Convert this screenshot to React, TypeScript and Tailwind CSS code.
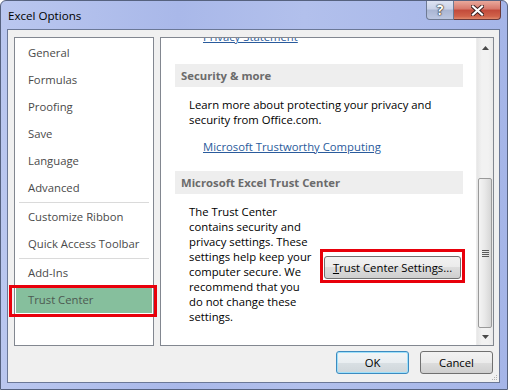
import React from "react";

const navTop = ["General", "Formulas", "Proofing", "Save", "Language", "Advanced"];

function NavItem({ label }: { label: string }) {
  return (
    <div className="h-[27px] flex items-center pl-[13px] text-[#4a4a4a] whitespace-nowrap">{label}</div>
  );
}

function Sep() {
  return <div className="h-[1px] mx-[4px] bg-[#dadada]" />;
}

export default function App() {
  return (
    <div className="relative w-[508px] h-[390px] overflow-hidden font-['Open_Sans',sans-serif] text-[11.3px] leading-[15px] text-black rounded-t-[6px] border border-[#56627f] bg-[linear-gradient(90deg,#bac7ef_0%,#a9b8e9_35%,#b2c0ec_60%,#a5b5e8_100%)]">
      {/* title bar */}
      <div className="flex h-[28px] items-start justify-between">
        <div className="pl-[7px] pt-[7px] text-[11.6px] text-black">Excel Options</div>
        <div className="flex pr-[6px]">
          <div className="w-[28px] h-[19px] flex items-center justify-center rounded-bl-[4px] border border-t-0 border-[#6e7a93] bg-[linear-gradient(180deg,#dde3f2_0%,#c9d2e8_45%,#a9b5d2_50%,#bcc7e2_100%)] font-bold text-[14px] leading-[14px] text-white [text-shadow:0_0_1px_#222,0_0_1px_#222,0_0_2px_#333]">
            ?
          </div>
          <div className="w-[47px] h-[19px] flex items-center justify-center rounded-br-[4px] border border-l-0 border-t-0 border-[#6b3a3a] bg-[linear-gradient(180deg,#e9a99c_0%,#d6776a_45%,#c24a3a_50%,#d0624a_85%,#e0896c_100%)]">
            <svg width="13" height="11" viewBox="0 0 13 11">
              <path d="M2 1.5 L11 9.5 M11 1.5 L2 9.5" stroke="#3a2020" strokeWidth="4" strokeLinecap="square" />
              <path d="M2 1.5 L11 9.5 M11 1.5 L2 9.5" stroke="#ffffff" strokeWidth="2.2" strokeLinecap="square" />
            </svg>
          </div>
        </div>
      </div>

      {/* client area */}
      <div className="relative ml-[6px] mr-[7px] h-[354px] border border-[#6b7897] bg-[#f0f0f0] flex flex-col">
        <div className="flex gap-[6px] pl-[6px] pt-[7px] h-[316px]">
          {/* left nav */}
          <div className="w-[140px] h-[309px] border border-[#828790] bg-white pt-[1px]">
            {navTop.map((n) => (
              <NavItem key={n} label={n} />
            ))}
            <div className="mt-[1px]">
              <Sep />
            </div>
            <NavItem label="Customize Ribbon" />
            <NavItem label="Quick Access Toolbar" />
            <div className="mt-[1px]">
              <Sep />
            </div>
            <div className="h-[26px] flex items-center pl-[13px] text-[#4a4a4a]">Add-Ins</div>
            <div className="h-[29px] border border-white bg-[#86bf9d] flex items-center pl-[12px] text-[#4d5a52]">
              Trust Center
            </div>
          </div>

          {/* right panel */}
          <div className="w-[334px] h-[309px] border border-[#828790] bg-white flex">
            <div className="w-[315px] overflow-hidden">
              <div className="ml-[42px] -mt-[9px] text-[#2a5b9c] underline whitespace-nowrap">Privacy Statement</div>
              <div className="mt-[20px] ml-[14px] w-[288px] h-[23px] bg-[#eeeeee] pl-[6px] flex items-center font-bold text-[#6b6b6b]">
                Security &amp; more
              </div>
              <div className="mt-[10px] ml-[28px] whitespace-nowrap">
                Learn more about protecting your privacy and
                <br />
                security from Office.com.
              </div>
              <div className="mt-[12px] ml-[42px] text-[#2a5b9c] underline whitespace-nowrap">
                Microsoft Trustworthy Computing
              </div>
              <div className="mt-[17px] ml-[14px] w-[288px] h-[23px] bg-[#eeeeee] pl-[6px] flex items-center font-bold text-[#6b6b6b]">
                Microsoft Excel Trust Center
              </div>
              <div className="mt-[10px] ml-[28px] flex items-start">
                <div className="w-[135px] whitespace-nowrap">
                  The Trust Center
                  <br />
                  contains security and
                  <br />
                  privacy settings. These
                  <br />
                  settings help keep your
                  <br />
                  computer secure. We
                  <br />
                  recommend that you
                  <br />
                  do not change these
                  <br />
                  settings.
                </div>
                <div className="relative mt-[52px]">
                  <div className="w-[137px] h-[23px] rounded-[3px] border border-[#707070] bg-[linear-gradient(180deg,#f2f2f2_0%,#ebebeb_50%,#dddddd_50%,#cfcfcf_100%)] flex items-center justify-center whitespace-nowrap">
                    <span>
                      <span className="underline">T</span>rust Center Settings...
                    </span>
                  </div>
                  <div className="absolute -left-[4px] -top-[7px] w-[145px] h-[34px] border-[3px] border-[#e8000b]" />
                </div>
              </div>
            </div>

            {/* scrollbar */}
            <div className="w-[17px] h-full flex flex-col border-l border-[#ececec] bg-[linear-gradient(90deg,#e6e6e6_0%,#f2f2f2_30%,#f2f2f2_70%,#e9e9e9_100%)]">
              <div className="h-[19px] flex items-center justify-center">
                <svg width="7" height="4" viewBox="0 0 7 4">
                  <path d="M3.5 0 L7 4 L0 4 Z" fill="#4a4a4a" />
                </svg>
              </div>
              <div className="flex-1" />
              <div className="mx-[1px] h-[150px] rounded-[2px] border border-[#9a9a9a] bg-[linear-gradient(90deg,#f4f4f4_0%,#e8e8e8_50%,#d6d6d6_100%)] flex items-center justify-center">
                <div className="flex flex-col gap-[1px]">
                  <div className="w-[7px] h-[1px] bg-[#5a5a5a]" />
                  <div className="w-[7px] h-[1px] bg-[#5a5a5a]" />
                  <div className="w-[7px] h-[1px] bg-[#5a5a5a]" />
                  <div className="w-[7px] h-[1px] bg-[#5a5a5a]" />
                </div>
              </div>
              <div className="h-[17px] flex items-center justify-center">
                <svg width="7" height="4" viewBox="0 0 7 4">
                  <path d="M0 0 L7 0 L3.5 4 Z" fill="#4a4a4a" />
                </svg>
              </div>
            </div>
          </div>
        </div>

        {/* buttons */}
        <div className="mt-[5px] flex justify-end gap-[11px] pr-[6px]">
          <div className="w-[73px] h-[23px] rounded-[3px] border border-[#3c8bc0] shadow-[inset_0_0_0_1px_#9fe0fa] bg-[linear-gradient(180deg,#f2f5f7_0%,#e9eef1_50%,#d9e0e4_50%,#cfd6da_100%)] flex items-center justify-center">
            OK
          </div>
          <div className="w-[73px] h-[23px] rounded-[3px] border border-[#707070] bg-[linear-gradient(180deg,#f2f2f2_0%,#ebebeb_50%,#dddddd_50%,#cfcfcf_100%)] flex items-center justify-center">
            Cancel
          </div>
        </div>

        {/* resize grip */}
        <svg className="absolute right-[1px] bottom-[1px]" width="6" height="6" viewBox="0 0 6 6">
          <rect x="4" y="0" width="1" height="1" fill="#b0b0b0" />
          <rect x="2" y="2" width="1" height="1" fill="#b0b0b0" />
          <rect x="4" y="2" width="1" height="1" fill="#b0b0b0" />
          <rect x="0" y="4" width="1" height="1" fill="#b0b0b0" />
          <rect x="2" y="4" width="1" height="1" fill="#b0b0b0" />
          <rect x="4" y="4" width="1" height="1" fill="#b0b0b0" />
        </svg>
      </div>

      {/* annotation box around Trust Center nav item */}
      <div className="absolute left-[8px] top-[284px] w-[148px] h-[32px] border-[3px] border-[#e8000b]" />
    </div>
  );
}
